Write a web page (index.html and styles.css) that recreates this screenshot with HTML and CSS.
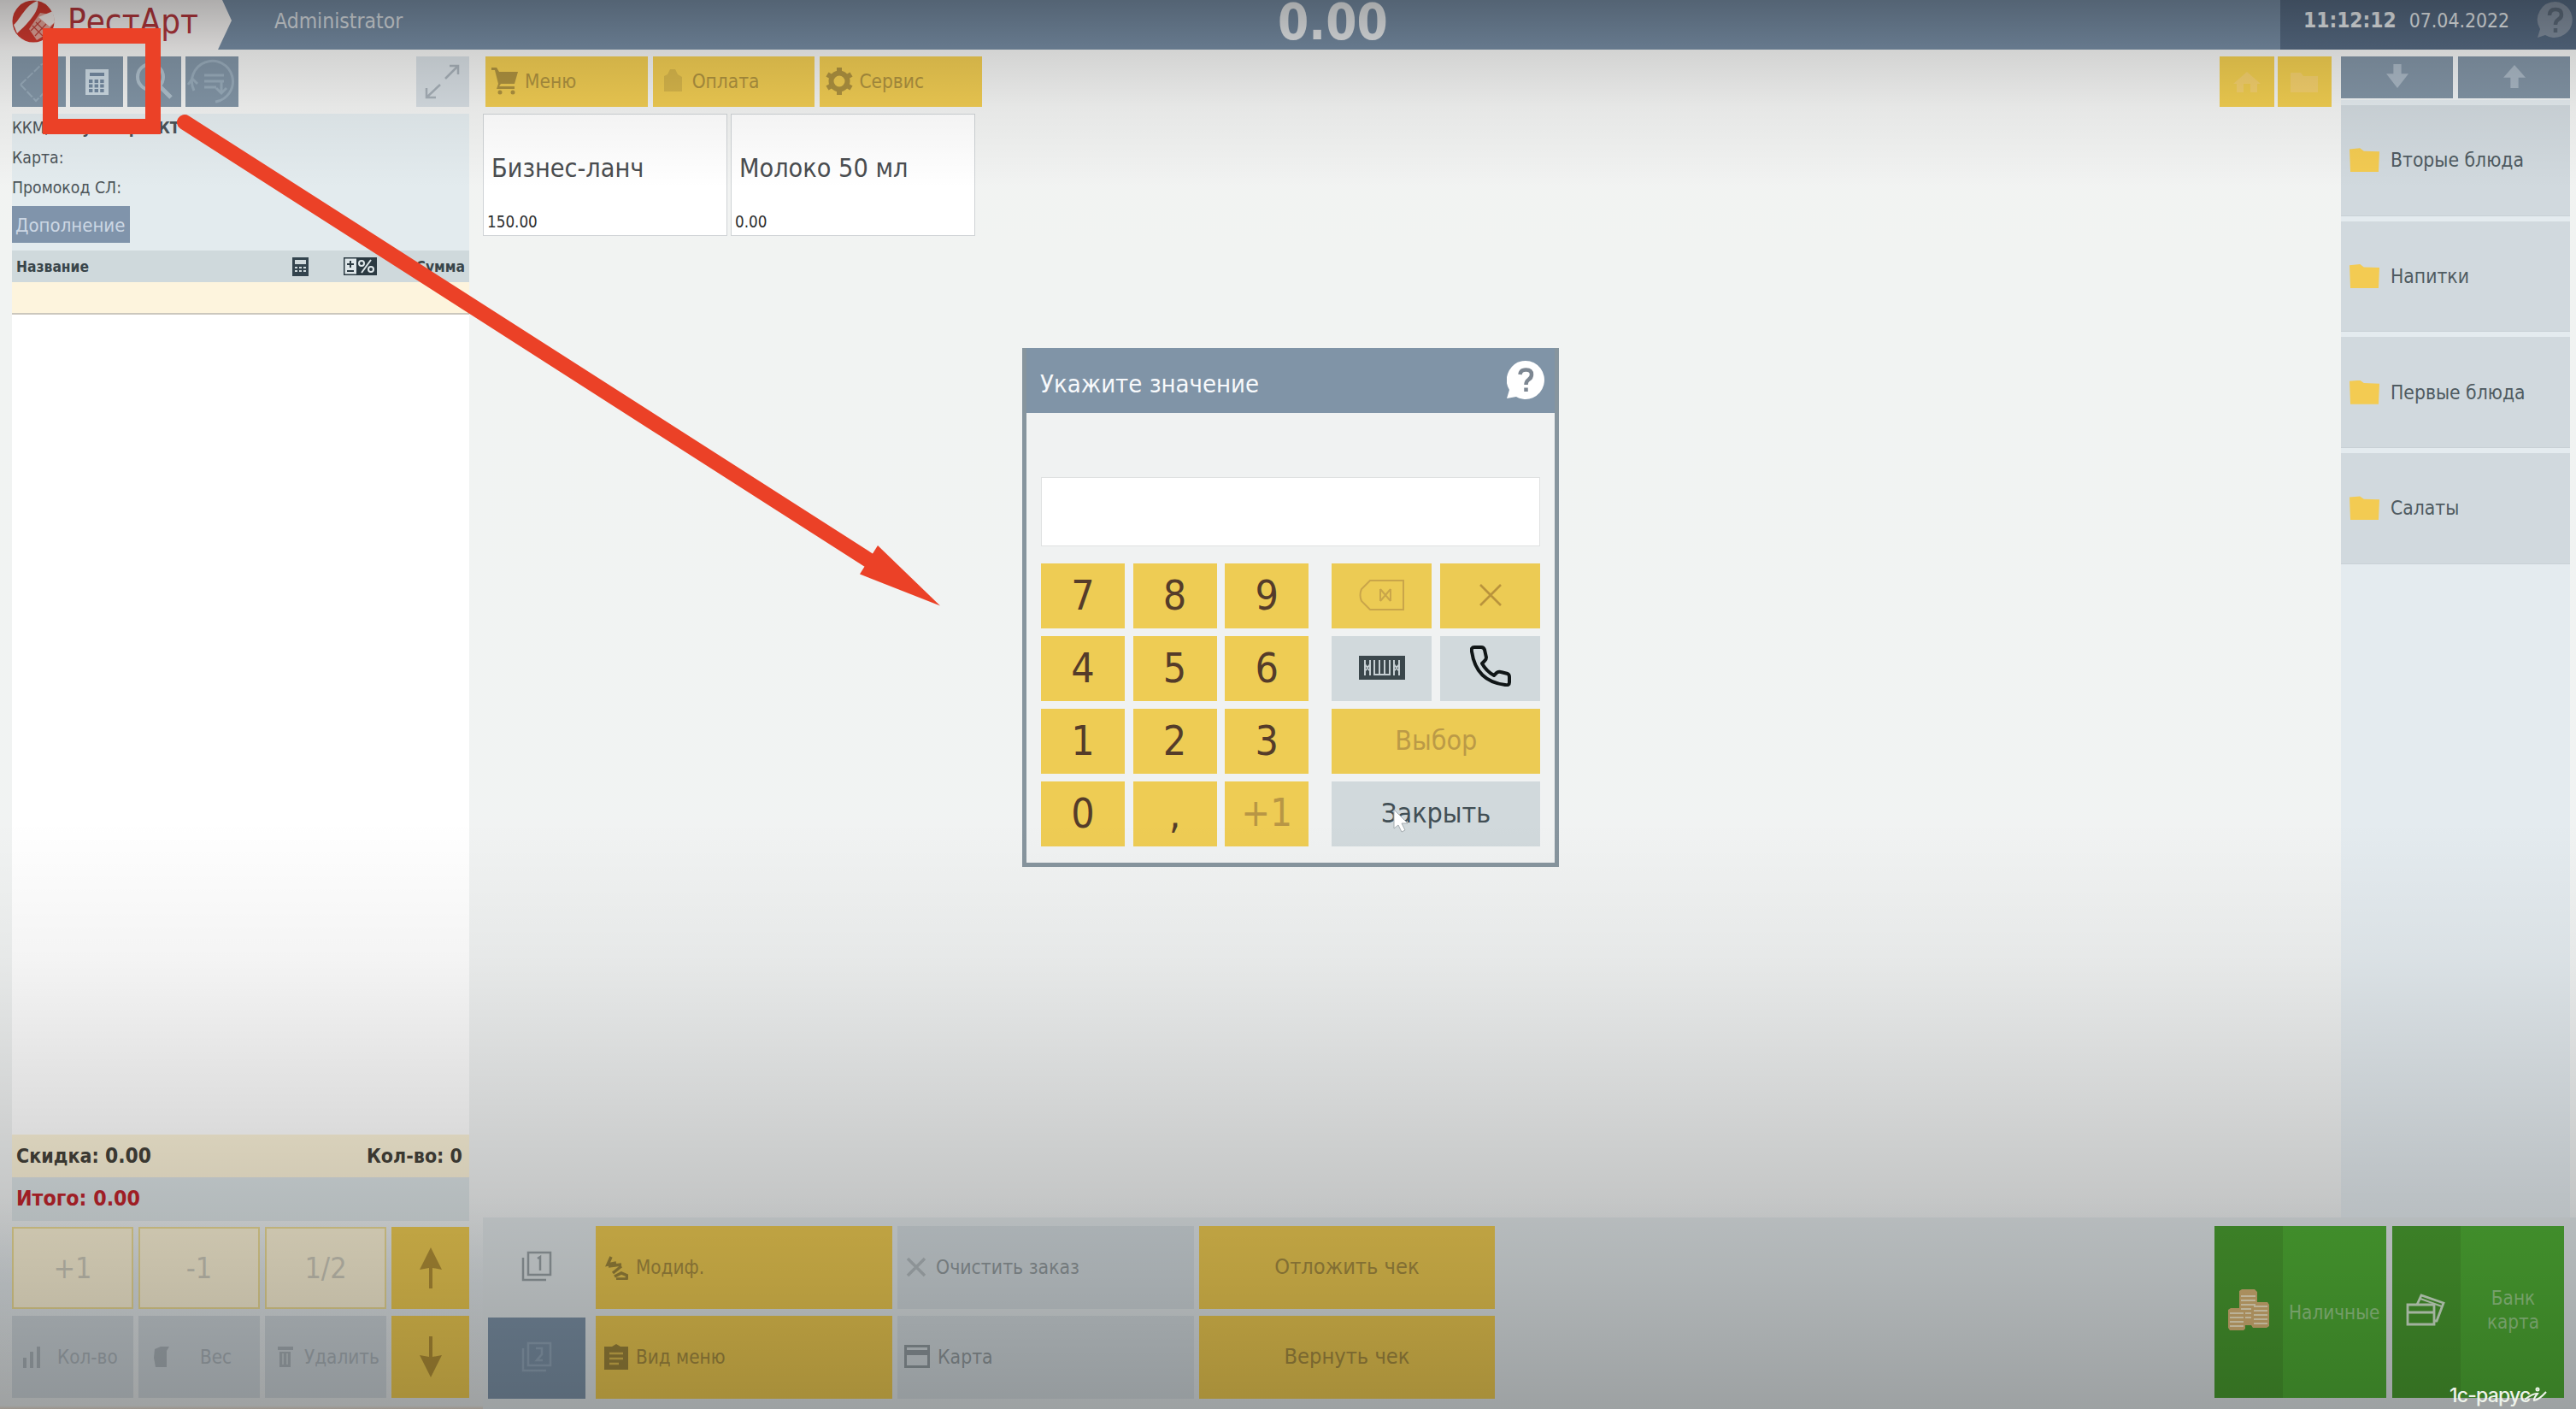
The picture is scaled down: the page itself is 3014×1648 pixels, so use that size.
FILE: index.html
```html
<!DOCTYPE html>
<html lang="ru">
<head>
<meta charset="utf-8">
<title>РестАрт</title>
<link rel="stylesheet" href="styles.css">
</head>
<body>
<div class="screen">
  <header class="header">
    <div class="brand">
      <svg class="brand-shape" width="271" height="58" viewBox="0 0 271 58"><path d="M0 0H260L271 24L255 58H0Z"/></svg>
      <div class="brand-content">
        <svg width="50" height="50" viewBox="0 0 50 50"><circle cx="25" cy="25" r="24.5" fill="#d23a30"/><path d="M2 29C9 24 16 5 30 1C32 8 28 19 6 39Z" fill="#f6efec"/><path d="M20 34L33 15L46 17L50 26L37 42L29 47Z" fill="#e6a69b"/><path d="M31 20L48 13L50 26L44 31Z" fill="#f6efec"/><path d="M24 30L36 42M28 26L40 38M22 36L34 24M27 42L40 28" stroke="#c4453c" stroke-width="1.2"/></svg>
        <span class="brand-name">РестАрт</span>
      </div>
    </div>
    <span class="user">Administrator</span>
    <strong class="sum">0.00</strong>
    <div class="clock"><strong>11:12:12</strong><span>07.04.2022</span>
      <svg width="44" height="44" viewBox="0 0 44 44"><path d="M22 0A21 21 0 1 1 10 39L1 42L4 32A21 21 0 0 1 22 0Z" fill="#8390a0"/><path d="M15 16Q15 9 22 9Q29 9 29 15Q29 19 25 21Q22 23 22 27M22 31V36" fill="none" stroke="#5d6b7b" stroke-width="4.5"/></svg>
    </div>
  </header>

  <main class="main">
    <aside class="order">
      <div class="tools">
        <div class="tool"><svg width="63" height="59" viewBox="0 0 63 59" fill="none" stroke="#98abba" stroke-width="2"><path d="M10 33L35 9M10 33L28 52L52 28V9H35" stroke-dasharray="9 2"/></svg></div>
        <div class="tool"><svg width="63" height="59" viewBox="0 0 63 59"><path fill="#ccdae3" d="M18 15H45V45H18Z"/><path fill="#7389a0" d="M23 19H40V23H23Z"/><path stroke="#7389a0" stroke-width="4" stroke-dasharray="4.4 2.2" d="M22 29H41M22 34.500H41M22 40H41"/></svg></div>
        <div class="tool"><svg width="63" height="59" viewBox="0 0 63 59" fill="none" stroke="#aebfcb" stroke-width="4"><circle cx="27" cy="24" r="15"/><path d="M37 34L51 48" stroke-width="5"/></svg></div>
        <div class="tool"><svg width="63" height="59" viewBox="0 0 63 59" fill="none" stroke="#98abba" stroke-width="3"><path d="M10 40A24 24 0 1 1 35 53M8 26L3 33M8 26L14 32"/><path d="M22 22H45M22 29H45M22 36H36M42 30V42M36 37L42 43L48 37"/></svg></div>
        <div class="tool tool-light"><svg width="63" height="59" viewBox="0 0 63 59" fill="none" stroke="#a6afb7" stroke-width="2.500"><path d="M34 26L49 11M39 11H49V21M28 33L12 48M12 37V48H23"/></svg></div>
      </div>
      <div class="info">
        <div class="info-row kkm"><span>ККМ,</span><b>Эмулятор ФКТ</b></div>
        <div class="info-row">Карта:</div>
        <div class="info-row">Промокод СЛ:</div>
        <div class="addon">Дополнение</div>
      </div>
      <div class="table-head"><b>Название</b>
        <svg class="head-calc" width="19" height="22" viewBox="0 0 19 22"><path fill="#33444e" d="M0 0H19V22H0Z"/><path fill="#cfd9dc" d="M3 3H16V8H3Z"/><path stroke="#cfd9dc" stroke-width="2" stroke-dasharray="3 2" d="M3 12H16M3 16H16"/></svg>
        <svg class="head-pct" width="39" height="21" viewBox="0 0 39 21"><path fill="#2b3a42" d="M0 0H39V21H0Z"/><path fill="#dfe7ea" d="M1.500 1.500H15V19.500H1.500Z"/><path d="M8 4V12M4 8H12M4 16H12" stroke="#2b3a42" stroke-width="2"/><path d="M32 3L21 18" stroke="#dfe7ea" stroke-width="2"/><circle cx="21" cy="7" r="3" fill="none" stroke="#dfe7ea" stroke-width="2"/><circle cx="32" cy="14" r="3" fill="none" stroke="#dfe7ea" stroke-width="2"/></svg>
        <b class="head-sum">Сумма</b></div>
      <div class="row-current"></div>
      <div class="rows"></div>
      <div class="total discount"><span>Скидка: <b>0.00</b></span><span>Кол-во: 0</span></div>
      <div class="total grand"><span>Итого: 0.00</span></div>
      <div class="order-pad">
        <div class="pad-cream">+1</div><div class="pad-cream">-1</div><div class="pad-cream">1/2</div>
        <div class="pad-arrow"><svg width="26" height="48" viewBox="0 0 26 48"><path d="M13 0L26 26L15 24V48H11V24L0 26Z"/></svg></div>
        <div class="pad-gray"><svg width="24" height="26" viewBox="0 0 24 26"><path d="M1 14H5V26H1ZM9 7H13V26H9ZM17 1H21V26H17Z"/></svg><span>Кол-во</span></div>
        <div class="pad-gray pad-weight"><svg width="24" height="26" viewBox="0 0 24 26"><path d="M3 4L10 1H20L17 6V25H4L2 14Z"/></svg><span>Вес</span></div>
        <div class="pad-gray"><svg width="20" height="26" viewBox="0 0 20 26"><path d="M1 1H19V5H1ZM3 7H16V25H3Z"/><path d="M7 9V22M12 9V22" stroke="#c3ccd0" stroke-width="2"/></svg><span>Удалить</span></div>
        <div class="pad-arrow"><svg width="26" height="48" viewBox="0 0 26 48"><path d="M13 48L26 22L15 24V0H11V24L0 22Z"/></svg></div>
      </div>
    </aside>

    <section class="work">
      <div class="work-top">
        <div class="catalog">
          <nav class="menu">
            <div class="menu-btn"><svg width="32" height="32" viewBox="0 0 32 32"><path d="M0 0H6L9 5H31L27 19H11L9 22H27V25H6L8 19L4 3H0Z"/><circle cx="10" cy="29" r="2.500"/><circle cx="25" cy="29" r="2.500"/></svg>Меню</div>
            <div class="menu-btn faint"><svg width="32" height="32" viewBox="0 0 32 32"><path d="M6 10L10 8L13 2H19L22 8L27 11V28H6Z"/></svg>Оплата</div>
            <div class="menu-btn"><svg width="32" height="32" viewBox="0 0 32 32" fill="none"><circle cx="16" cy="16" r="9.500" fill="none" stroke="#ad913f" stroke-width="6"/><path d="M16 0V6M16 26V32M2 8L7 11M25 21L30 24M30 8L25 11M7 21L2 24" stroke="#ad913f" stroke-width="6"/></svg>Сервис</div>
            <div class="nav-btns">
              <div class="nav-btn"><svg width="36" height="26" viewBox="0 0 36 26"><path d="M18 1L34 15H30V25H22V15H14V25H6V15H2Z"/></svg></div>
              <div class="nav-btn"><svg width="36" height="26" viewBox="0 0 36 26"><path d="M2 2H14L17 6H34V25H2Z"/></svg></div>
            </div>
          </nav>
          <div class="cards">
            <div class="card"><span class="card-name">Бизнес-ланч</span><span class="card-price">150.00</span></div>
            <div class="card"><span class="card-name">Молоко 50 мл</span><span class="card-price">0.00</span></div>
          </div>
        </div>
        <aside class="groups">
          <div class="scroll">
            <div><svg width="26" height="28" viewBox="0 0 28 30"><path d="M9 0H19V12H28L14 30L0 12H9Z"/></svg></div>
            <div><svg width="26" height="28" viewBox="0 0 28 30"><path d="M9 30H19V17H28L14 1L0 17H9Z"/></svg></div>
          </div>
          <div class="group"><i class="folder"></i>Вторые блюда</div>
          <div class="group"><i class="folder"></i>Напитки</div>
          <div class="group"><i class="folder"></i>Первые блюда</div>
          <div class="group"><i class="folder"></i>Салаты</div>
        </aside>
      </div>
      <footer class="actions">
        <div class="tabs">
          <div class="tab"><svg width="36" height="36" viewBox="0 0 36 36" fill="none" stroke="#9aa3a7" stroke-width="2.500"><path d="M8 2H34V28H8ZM2 8V34H29"/><path d="M19 9L22 7V23" /></svg></div>
          <div class="tab tab-on"><svg width="36" height="36" viewBox="0 0 36 36" fill="none" stroke="#93a8bb" stroke-width="2.500"><path d="M8 2H34V28H8ZM2 8V34H29"/><path d="M17 8H24V15L18 22H25"/></svg></div>
        </div>
        <div class="action-grid">
          <div class="act yellow"><svg width="28" height="30" viewBox="0 0 28 30" fill="none" stroke="#9d863c" stroke-width="3.500"><path d="M8 3L4 12L14 10M5 14L20 12M10 22L20 14M12 26L20 22L27 25L26 29H14"/></svg>Модиф.</div>
          <div class="act gray"><svg width="28" height="28" viewBox="0 0 28 28" fill="none" stroke="#b3bbbf" stroke-width="3.500"><path d="M4 4L24 24M24 4L4 24"/></svg>Очистить заказ</div>
          <div class="act yellow center">Отложить чек</div>
          <div class="act yellow"><svg width="28" height="30" viewBox="0 0 28 30"><path fill="#9d863c" d="M0 3H9L14 0L19 3H28V30H0Z"/><path d="M6 11H22M6 17H22M6 23H17" stroke="#ddbd50" stroke-width="2.500"/></svg>Вид меню</div>
          <div class="act gray"><svg width="30" height="28" viewBox="0 0 30 28"><path d="M1.500 1.500H28.500V25.500H1.500Z" fill="none" stroke="#939da2" stroke-width="3"/><path d="M0 6H30V12H0Z" fill="#939da2"/></svg>Карта</div>
          <div class="act yellow center">Вернуть чек</div>
        </div>
        <div class="pay">
          <div class="pay-btn"><div class="pay-icon"><svg width="48" height="48" viewBox="0 0 48 48"><path fill="#dcb878" d="M13 2L16 0H31L34 3V15H46L48 18V43L45 45H29L27 42H20V46L18 48H2L0 45V24L3 22H13Z"/><path d="M15 8H32M15 13H32M15 18H32M15 23H27M2 28H18M2 33H18M2 38H18M2 43H18M30 20H46M30 25H46M30 30H46M30 35H46M30 40H46M20 28H27M20 33H27" stroke="#f7ebc8" stroke-width="2"/></svg></div><span>Наличные</span></div>
          <div class="pay-btn pay-card"><div class="pay-icon"><svg width="46" height="38" viewBox="0 0 46 38" fill="none" stroke="#d7ecd2" stroke-width="2.800"><path d="M2 13H33V36H2ZM2 22H33" /><path d="M13 13L18 2L44 11L36 32H33"/><path d="M17 6L42 15" stroke-width="2"/></svg></div><span>Банк<br>карта</span></div>
        </div>
      </footer>
    </section>
  </main>

  <div class="dialog">
    <div class="dialog-head"><span>Укажите значение</span>
      <svg width="44" height="46" viewBox="0 0 44 46"><path d="M22 0A22 22.500 0 1 1 11 42L0 44L3 34A22 22.500 0 0 1 22 0Z" fill="#fff"/><path d="M15.500 16Q16 10.500 22.500 10.500Q29 10.500 29 16Q29 20 25.500 22Q22.500 24 22.500 28M22.500 31.500V36" fill="none" stroke="#7d8792" stroke-width="4.500"/></svg>
    </div>
    <div class="dialog-input"></div>
    <div class="dialog-keys">
      <div class="digits">
        <div>7</div><div>8</div><div>9</div><div>4</div><div>5</div><div>6</div><div>1</div><div>2</div><div>3</div><div>0</div><div>,</div><div class="muted">+1</div>
      </div>
      <div class="commands">
        <div class="yellow-key"><svg width="54" height="36" viewBox="0 0 54 36" fill="none" stroke="#c9a54a" stroke-width="2"><path d="M13 1H52V35H13L3 25Q0 18 3 11Z"/><path d="M25 11L37 25M37 11L25 25M25 11V25M37 11V25"/></svg></div>
        <div class="yellow-key"><svg width="26" height="26" viewBox="0 0 26 26" fill="none" stroke="#b9933c" stroke-width="2.600"><path d="M1 1L25 25M25 1L1 25"/></svg></div>
        <div class="gray-key"><svg width="54" height="28" viewBox="0 0 54 28"><path fill="#3b474c" d="M0 0H54V28H0Z"/><path d="M7 5V23M13 5V23M7 10L13 18M13 10L7 18M18 5V22H36V5M24 5V22M30 5V22M41 5V23M47 5V23M41 18L47 10M41 10L47 18" fill="none" stroke="#c4cdd1" stroke-width="2"/></svg></div>
        <div class="gray-key"><svg class="phone" width="48" height="48" viewBox="0 0 48 48" fill="none" stroke="#101617" stroke-width="4" stroke-linejoin="round"><path d="M5 2H13Q16 2 17 5L19 14Q19 16 17 18L14 21Q19 30 28 35L31 32Q33 30 36 31L44 33Q46 34 46 37V43Q46 47 41 46Q7 42 2 7Q1 2 5 2Z"/></svg></div>
        <div class="yellow-key wide choose">Выбор</div>
        <div class="gray-key wide">Закрыть</div>
      </div>
    </div>
  </div>
  <svg class="cursor" width="18" height="28" viewBox="0 0 18 28"><path d="M1 1V23L6 19L10 27L14 25L10 17H17Z" fill="#fff" stroke="#a4acb0" stroke-width="1"/></svg>

  <div class="shade"></div>
  <div class="mark-box"></div>
  <svg class="mark-arrow" width="1110" height="720" viewBox="0 0 1110 720"><path d="M216 143L1016 655" stroke="#eb4127" stroke-width="18" stroke-linecap="round"/><path d="M1027 638L1100 708.500L1006 671.500Z" fill="#eb4127"/></svg>
  <div class="watermark"><span>1с-рарус</span><svg width="26" height="22" viewBox="0 0 26 22" fill="none" stroke="#eef3ea" stroke-width="2"><circle cx="15" cy="3" r="1.500"/><path d="M0 15Q10 7 15 8Q10 14 11 16Q17 15 25 6"/></svg></div>
</div>
</body>
</html>
```
FILE: styles.css
```css
* { box-sizing: border-box; }
body {
  margin: 0;
  font-family: "DejaVu Sans Condensed", "DejaVu Sans", sans-serif;
  font-stretch: condensed;
}
svg { display: block; flex: none; }
.screen {
  position: relative;
  width: 3014px;
  height: 1648px;
  overflow: hidden;
  display: flex;
  flex-direction: column;
  background: linear-gradient(#f3f3f2 0, #f1f3f2 300px, #f1f3f3 1400px, #e2e8eb 1500px, #e3e7e8 1644px, #dfd3c5 1648px);
}

/* Header */
.header {
  display: flex;
  height: 58px;
  background: #768ca3;
  color: #e8ecee;
}
.brand { position: relative; width: 271px; height: 58px; }
.brand-shape { position: absolute; left: 0; top: 0; fill: #f5f3f2; }
.brand-content {
  position: relative;
  display: flex;
  align-items: center;
  height: 50px;
  padding-left: 14px;
  gap: 15px;
}
.brand-name { font-size: 40px; line-height: 50px; color: #b3373c; }
.user { width: 1224px; padding-left: 50px; font-size: 24.5px; line-height: 50px; color: #d8dde1; }
.sum { flex: 1; font-size: 58px; line-height: 53px; color: #e8ebed; }
.clock {
  display: flex;
  width: 346px;
  padding-left: 27px;
  background: #566a82;
  font-size: 24.3px;
  line-height: 48px;
}
.clock span { width: 151px; margin-left: 15px; font-size: 22.8px; }
.clock svg { margin: 2px 0 0 -2px; }

/* Columns */
.main { display: flex; gap: 16px; height: 1590px; padding: 8px 7px 0 14px; }
.order { width: 535px; display: flex; flex-direction: column; }
.tools { display: flex; gap: 5px; height: 67px; }
.tool { width: 62.5px; height: 59px; background: #8295a6; }
.tool-light { margin-left: auto; background: #d5dce1; }
.info {
  height: 160px;
  background: #e3ebee;
  font-size: 19.300px;
  line-height: 33px;
  color: #4c5459;
}
.info-row { height: 35px; }
.kkm { display: flex; justify-content: space-between; width: 196px; font-size: 19px; letter-spacing: -0.3px; }
.addon {
  width: 138px;
  height: 43px;
  margin-top: 3px;
  padding-left: 4px;
  background: #8094ab;
  font-size: 22px;
  line-height: 45px;
  color: #ccd7e4;
}
.table-head {
  display: flex;
  align-items: center;
  height: 37px;
  margin-top: 0;
  padding: 0 5px;
  background: #cfd9dc;
  font-size: 17.300px;
  color: #39454a;
}
.table-head b:first-child { width: 323px; }
.head-pct { margin-left: 41px; }
.head-sum { margin-left: auto; }
.row-current { height: 38px; background: #fdf4dd; border-bottom: 2px solid #cbc7bd; }
.rows { flex: 1; background: #fff; }
.total { display: flex; justify-content: space-between; padding: 0 8px 0 5px; font-weight: bold; }
.discount { height: 50px; background: #fdf4da; font-size: 23px; line-height: 50px; color: #45423a; }
.discount b { font-size: 24.300px; }
.grand { height: 51px; background: #dde5e7; font-size: 24.700px; line-height: 49px; color: #c1252d; }
.order-pad {
  display: grid;
  grid-template-columns: 142px 142px 142px 91px;
  grid-template-rows: 96px 96px;
  gap: 8px 6px;
  margin: 7px 0 13px;
}
.pad-cream {
  border: 2px solid #ecdc96;
  background: #fdf4d8;
  font-size: 34px;
  line-height: 92px;
  text-align: center;
  color: #cfccbd;
}
.pad-gray {
  display: flex;
  align-items: center;
  gap: 17px;
  padding-left: 12px;
  background: #cdd5da;
  font-size: 22.300px;
  color: #abb4ba;
  fill: #abb4ba;
}
.pad-gray:nth-child(7) { gap: 12px; padding-left: 14px; }
.pad-weight { gap: 32px; padding-left: 16px; }
.pad-arrow { display: flex; align-items: center; justify-content: center; background: #efcc53; fill: #b49238; }

/* Work area */
.work { flex: 1; display: flex; flex-direction: column; }
.work-top { display: flex; gap: 11px; height: 1358px; }
.catalog { flex: 1; }
.menu { display: flex; gap: 6px; padding-left: 3px; }
.menu-btn {
  display: flex;
  align-items: center;
  gap: 7px;
  width: 189.700px;
  height: 59px;
  padding: 0 7px 2px;
  background: #efcb52;
  font-size: 22.500px;
  color: #ad913f;
  fill: #ad913f;
}
.menu-btn.faint svg { opacity: .35; }
.nav-btns { display: flex; gap: 4px; margin-left: auto; }
.nav-btn {
  display: flex;
  align-items: center;
  justify-content: center;
  width: 63.500px;
  height: 59px;
  background: #f0cd50;
  fill: #f3cf6c;
}
.cards { display: flex; gap: 4px; margin-top: 8px; }
.card {
  display: flex;
  flex-direction: column;
  justify-content: space-between;
  width: 286px;
  height: 143px;
  padding: 44px 0 4px 4px;
  border: 1px solid #cfd3d6;
  background: #fff;
  color: #4a4d50;
}
.card-name { padding-left: 5px; font-size: 30.300px; line-height: 38px; }
.card-price { font-size: 18.700px; line-height: 22px; color: #2c2e30; }

.groups { display: flex; flex-direction: column; gap: 6px; width: 268px; background: #e4ebef; }
.scroll { display: flex; gap: 6px; height: 51px; background: #f0f3f5; }
.scroll div { flex: 1; display: flex; align-items: center; justify-content: center; height: 49px; padding-bottom: 4px; background: #8294a5; fill: #a9b7c4; }
.group {
  display: flex;
  align-items: center;
  gap: 13px;
  height: 129.700px;
  padding-left: 10px;
  background: #d1d9de;
  border-bottom: 1px solid #c8d0d5;
  font-size: 22.700px;
  color: #4f5b61;
}
.folder {
  width: 35px;
  height: 28px;
  background: #f3cb52;
  clip-path: polygon(0 4%, 35% 0, 48% 12%, 100% 14%, 97% 100%, 3% 100%);
}

/* Bottom actions */
.actions { display: flex; height: 224px; padding-top: 10px; background: #e1e7e9; margin-right: -7px; padding-right: 14px; }
.tabs { width: 114px; display: grid; grid-template-rows: 96px 95px; gap: 11px; margin-right: 18px; }
.tab { display: flex; align-items: center; justify-content: center; width: 114px; margin-left: 6px; padding-bottom: 3px; }
.tab-on { background: #7f95aa; }
.action-grid {
  display: grid;
  grid-template-columns: 347px 347px 346px;
  grid-template-rows: 97px 97px;
  gap: 8px 6px;
}
.act {
  display: flex;
  align-items: center;
  gap: 9px;
  padding: 0 10px 2px;
  font-size: 22.300px;
}
.yellow { background: #edca52; color: #a68d41; }
.gray { background: #d3dbdf; color: #939c9f; padding-left: 8px; font-size: 22.800px; }
.center { justify-content: center; font-size: 25.200px; }
.pay { display: flex; gap: 7px; margin-left: auto; height: 201px; }
.pay-btn {
  display: grid;
  grid-template-columns: 80px 1fr;
  align-items: center;
  width: 201px;
  padding-bottom: 6px;
  background: linear-gradient(90deg, #4a9e30 80px, #50af35 80px);
  font-size: 22.300px;
  line-height: 28px;
  color: #98cf89;
}
.pay-icon { padding-left: 16px; }
.pay-btn span { padding-left: 7px; padding-top: 6px; }
.pay-card span { text-align: center; padding: 0 0 0 2px; }

/* Numeric entry window */
.dialog {
  position: absolute;
  left: 1196px;
  top: 407px;
  width: 628px;
  height: 607px;
  border: 5px solid #87959e;
  border-top: 0;
  background: #f0f2f2;
}
.dialog-head {
  display: flex;
  justify-content: space-between;
  align-items: center;
  height: 76px;
  padding: 0 12px 0 16px;
  background: #8094a7;
  font-size: 29px;
  color: #f7f9fb;
}
.dialog-head span { padding-top: 8px; }
.dialog-input { height: 81px; margin: 75px 17px 0 17px; border: 1px solid #dfe1e1; background: #fff; }
.dialog-keys { display: flex; justify-content: space-between; margin: 20px 17px 0 17px; }
.digits { display: grid; grid-template-columns: 98px 98px 98px; grid-auto-rows: 75.500px; gap: 9.600px; }
.digits div { background: #eecc54; color: #553c2a; font-size: 48px; line-height: 74px; text-align: center; }
.digits .muted { color: #b89645; font-size: 45px; }
.commands { display: grid; grid-template-columns: 117px 117px; grid-auto-rows: 75.500px; gap: 9.600px; font-size: 32px; }
.commands div { display: flex; align-items: center; justify-content: center; padding-bottom: 2px; }
.yellow-key { background: #eccb54; }
.gray-key { background: #d1d9dc; color: #424f55; }
.gray-key .phone { margin-top: -4px; }
.wide { grid-column: span 2; }
.commands .choose { color: #bb9a47; }
.cursor { position: absolute; left: 1630px; top: 946px; }

/* Player shading and marks over the screen */
.shade {
  position: absolute;
  inset: 0;
  pointer-events: none;
  background: linear-gradient(rgba(0,0,0,.29) 0, rgba(0,0,0,.13) 60px, rgba(0,0,0,.05) 125px, transparent 220px, transparent 960px, rgba(0,0,0,.045) 1120px, rgba(0,0,0,.13) 1300px, rgba(0,0,0,.18) 1400px, rgba(0,0,0,.225) 1500px, rgba(0,0,0,.3) 1648px);
}
.mark-box { position: absolute; left: 50px; top: 33px; width: 138px; height: 124px; border: 18px solid #eb4127; }
.mark-arrow { position: absolute; left: 0; top: 0; }
.watermark {
  position: absolute;
  left: 2866px;
  top: 1616px;
  display: flex;
  font: 500 23px/32px Inter, sans-serif;
  letter-spacing: -0.8px;
  color: #eef3ea;
}
.watermark svg { margin: 6px 0 0 -6px; }
```
